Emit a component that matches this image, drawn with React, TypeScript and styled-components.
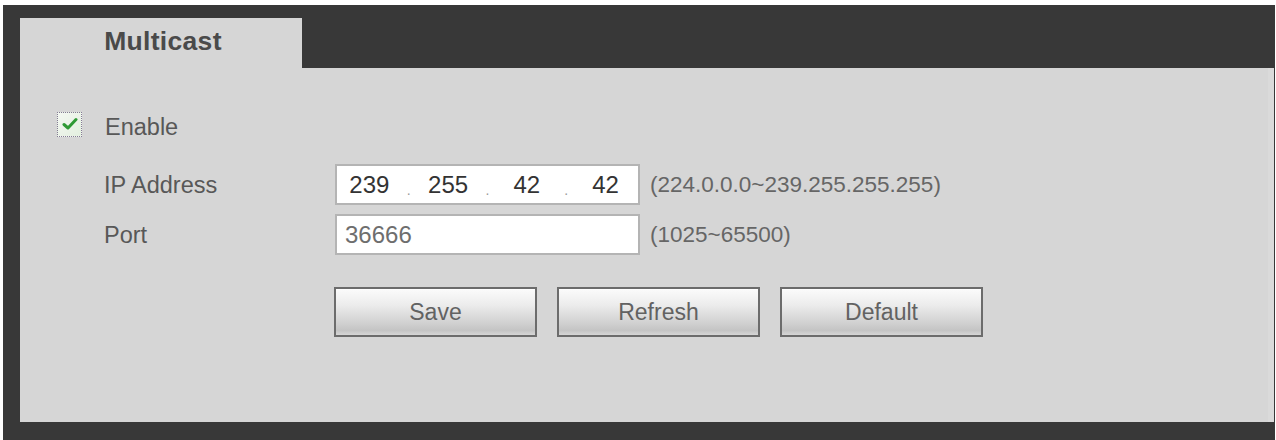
import React from "react"
import styled, { createGlobalStyle } from "styled-components"

const GlobalStyle = createGlobalStyle`
  html, body {
    margin: 0;
    padding: 0;
    background: #ffffff;
  }
  body {
    font-family: "Liberation Sans", Arial, sans-serif;
  }
`

const Frame = styled.div`
  margin: 5px 0 0 3px;
  width: 1272px;
  height: 435px;
  box-sizing: border-box;
  padding: 13px 1px 18px 17px;
  background: #383838;
  display: flex;
  flex-direction: column;
`

const TabBar = styled.div`
  display: flex;
  height: 50px;
  flex-shrink: 0;
`

const Tab = styled.div`
  width: 282px;
  background: #d6d6d6;
  display: flex;
  align-items: center;
  justify-content: center;
  padding: 0 0 4px 4px;
  box-sizing: border-box;
  font-size: 26.5px;
  font-weight: bold;
  color: #4a4a4a;
  letter-spacing: 0.3px;
`

const Panel = styled.div`
  flex: 1;
  background: #d6d6d6;
  border-right: 6px solid #dadada;
  padding: 44px 0 0 37px;
  box-sizing: border-box;
  color: #585858;
  font-size: 23.5px;
`

const CheckRow = styled.label`
  display: flex;
  align-items: center;
  height: 24px;
  gap: 23px;
`

const CheckBox = styled.span`
  width: 23px;
  height: 23px;
  border: 1px dotted #857a95;
  background: linear-gradient(135deg, #f4f8f2, #e3efdf);
  display: flex;
  align-items: center;
  justify-content: center;
`

const CheckText = styled.span`
  padding-top: 6px;
`

const Fields = styled.div`
  margin: 28px 0 0 47px;
  display: grid;
  grid-template-columns: 231px 305px auto;
  grid-auto-rows: 41px;
  row-gap: 9px;
  align-items: center;
`

const Label = styled.span`
  padding-top: 1px;
`

const InputBox = styled.div<{ dim?: boolean }>`
  height: 41px;
  box-sizing: border-box;
  border: 2px solid #b4b4b4;
  background: #ffffff;
  display: flex;
  align-items: center;
  font-size: 24px;
  color: ${({ dim }) => (dim ? "#6e6e6e" : "#333333")};
  padding-left: ${({ dim }) => (dim ? "8px" : "0")};
`

const Octet = styled.span`
  width: 65px;
  text-align: center;
`

const Dot = styled.span`
  width: 14px;
  text-align: center;
  color: #9a9a9a;
  font-size: 14px;
  padding-top: 10px;
`

const Range = styled.span`
  padding-left: 10px;
  color: #666666;
  font-size: 22.5px;
`

const Buttons = styled.div`
  display: flex;
  gap: 20px;
  margin: 32px 0 0 277px;
`

const Button = styled.button`
  width: 203px;
  height: 50px;
  border: 2px solid #6c6c6c;
  box-shadow: inset 0 1px 0 #ffffff;
  background: linear-gradient(#fbfbfb 0%, #ececec 35%, #d0d0d0 75%, #c4c4c4 90%, #d6d6d6 100%);
  font-family: "Liberation Sans", Arial, sans-serif;
  font-size: 23px;
  color: #626262;
  padding: 0;
`

const Check = () => (
  <svg width="16" height="14" viewBox="0 0 16 14">
    <path d="M2 7.5 L6 11 L14 2.5" fill="none" stroke="#2f9a35" strokeWidth="3" strokeLinecap="round" strokeLinejoin="round" />
  </svg>
)

export default function App() {
  const ip = ["239", "255", "42", "42"]
  return (
    <>
      <GlobalStyle />
      <Frame>
        <TabBar>
          <Tab>Multicast</Tab>
        </TabBar>
        <Panel>
          <CheckRow>
            <CheckBox>
              <Check />
            </CheckBox>
            <CheckText>Enable</CheckText>
          </CheckRow>
          <Fields>
            <Label>IP Address</Label>
            <InputBox>
              {ip.map((o, i) => (
                <React.Fragment key={i}>
                  {i > 0 && <Dot>.</Dot>}
                  <Octet>{o}</Octet>
                </React.Fragment>
              ))}
            </InputBox>
            <Range>(224.0.0.0~239.255.255.255)</Range>
            <Label>Port</Label>
            <InputBox dim>36666</InputBox>
            <Range>(1025~65500)</Range>
          </Fields>
          <Buttons>
            <Button>Save</Button>
            <Button>Refresh</Button>
            <Button>Default</Button>
          </Buttons>
        </Panel>
      </Frame>
    </>
  )
}
